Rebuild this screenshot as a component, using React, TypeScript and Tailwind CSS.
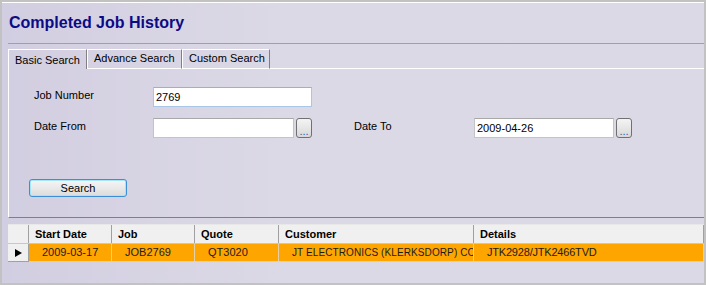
import React from "react";

const font = { fontFamily: '"Liberation Sans", Arial, sans-serif' };

const Tabs = [
  { label: "Basic Search", w: "w-[79px]", active: true },
  { label: "Advance Search", w: "w-[95px]", active: false },
  { label: "Custom Search", w: "w-[88px]", active: false },
];

const Columns = [
  { label: "Start Date", value: "2009-03-17", w: "w-[83px] shrink-0", tight: "text-[11px]" },
  { label: "Job", value: "JOB2769", w: "w-[83px] shrink-0", tight: "text-[11px]" },
  { label: "Quote", value: "QT3020", w: "w-[84px] shrink-0", tight: "text-[11px]" },
  { label: "Customer", value: "JT ELECTRONICS (KLERKSDORP) CC", w: "w-[195px] shrink-0", tight: "text-[10px] tracking-[0.1px]" },
  { label: "Details", value: "JTK2928/JTK2466TVD", w: "flex-1 min-w-0", tight: "text-[11px] tracking-[-0.2px]" },
];

function DotsButton() {
  return (
    <button className="ml-[2px] h-[20px] w-[16px] rounded-[3px] border border-[#707070] bg-linear-to-b from-[#f4f4f4] to-[#d8d8d8] flex items-end justify-center pb-[1px] text-[11px] leading-[9px] text-[#2a5fae]">
      ...
    </button>
  );
}

function Label({ text, w }: { text: string; w: string }) {
  return <div className={`${w} pt-[2px] text-[11px] leading-[13px] text-black`}>{text}</div>;
}

export default function App() {
  return (
    <div
      style={font}
      className="w-[706px] h-[285px] border-2 border-[#c2c2c2] bg-linear-to-r from-[#d2cee1] to-[#dcd9e6] to-40% overflow-hidden"
    >
      <div className="h-full border-t border-white flex flex-col">
        <div className="h-[40px] pl-[7px] pt-[10px]">
          <h1 className="text-[16px] leading-[20px] font-bold text-[#0b0b85]">Completed Job History</h1>
        </div>
        <div className="ml-[6px] border-t border-[#a0a0a0]" />

        {/* tab strip */}
        <div className="ml-[6px] mt-[5px] flex h-[20px]">
          {Tabs.map((t) => (
            <div
              key={t.label}
              className={`${t.w} h-[20px] border-t border-r border-t-white border-r-[#808080] ${
                t.active ? "border-l border-l-white pt-[4px] pl-[6px]" : "border-l border-l-white border-b border-b-white pt-[2px] pl-[6px]"
              } text-[11px] leading-[13px] text-black whitespace-nowrap`}
            >
              {t.label}
            </div>
          ))}
          <div className="flex-1 border-b border-white" />
        </div>

        {/* tab page */}
        <div className="ml-[6px] h-[149px] border-l border-l-white border-b border-b-[#808080] flex flex-col">
          <div className="mt-[18px] flex items-start pl-[25px]">
            <Label text="Job Number" w="w-[119px]" />
            <div className="w-[159px] h-[20px] border border-[#a8c6e6] border-t-[#8fb3da] bg-white pl-[2px] text-[11px] leading-[18px] text-black">
              2769
            </div>
          </div>
          <div className="mt-[11px] flex items-start pl-[25px]">
            <Label text="Date From" w="w-[119px]" />
            <div className="w-[141px] h-[20px] border border-[#c4c4c4] border-t-[#a8a8a8] bg-white" />
            <DotsButton />
            <div className="w-[42px]" />
            <Label text="Date To" w="w-[120px]" />
            <div className="w-[140px] h-[20px] border border-[#c4c4c4] border-t-[#a8a8a8] bg-white pl-[2px] text-[11px] leading-[18px] text-black">
              2009-04-26
            </div>
            <DotsButton />
          </div>
          <div className="mt-[37px] pl-[20px]">
            <button className="w-[98px] h-[18px] rounded-[3px] border border-[#3b8fd9] shadow-[inset_0_0_0_1px_#a6e4f7] bg-linear-to-b from-[#f6f6f6] to-[#dcdcdc] text-[11px] leading-[14px] text-black">
              Search
            </button>
          </div>
        </div>

        {/* grid */}
        <div className="ml-[6px] mt-[6px] flex-1 flex flex-col">
          <div className="flex h-[20px] bg-[#f0f0f0] border-t border-[#e8e8e8] border-b border-b-[#c8c8c8]">
            <div className="w-[21px] shrink-0 border-r border-[#a0a0a0]" />
            {Columns.map((c) => (
              <div
                key={c.label}
                className={`${c.w} border-r border-[#a0a0a0] pl-[6px] text-[11px] leading-[18px] font-bold text-black whitespace-nowrap`}
              >
                {c.label}
              </div>
            ))}
          </div>
          <div className="flex h-[18px]">
            <div className="w-[21px] shrink-0 bg-[#f0f0f0] border-r border-b border-[#a0a0a0] flex items-center pl-[7px]">
              <svg width="7" height="8" viewBox="0 0 7 8">
                <polygon points="0,0 7,4 0,8" fill="#000" />
              </svg>
            </div>
            {Columns.map((c) => (
              <div
                key={c.label}
                className={`${c.w} ${c.tight} bg-[#ffa500] border-r border-b border-[#e6d0a8] pl-[13px] leading-[17px] text-[#1c1c1c] whitespace-nowrap overflow-hidden`}
              >
                {c.value}
              </div>
            ))}
          </div>
        </div>
      </div>
    </div>
  );
}
